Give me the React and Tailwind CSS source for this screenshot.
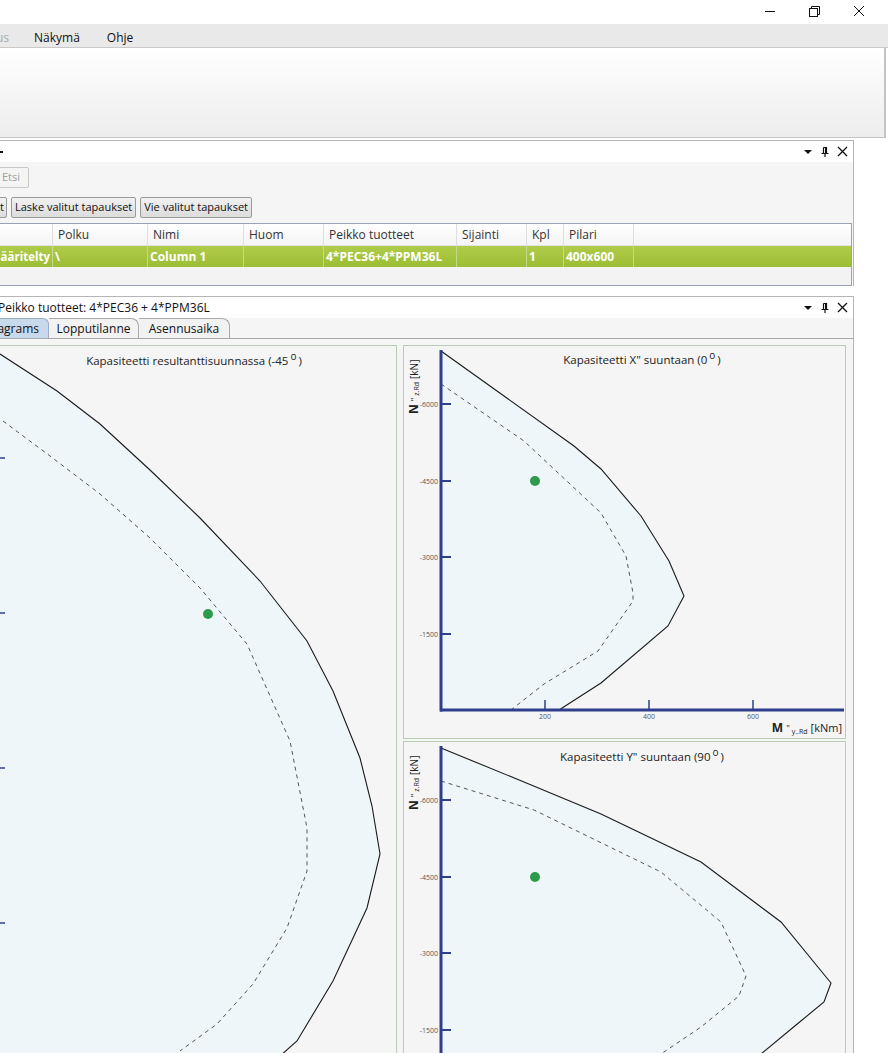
import React from 'react';

const FONT = "font-['Open_Sans','Noto_Sans',sans-serif]";

// ikkunan ohjaimet
const WinControls = () => (
  <div className="flex items-center h-full">
    <svg width="46" height="24" viewBox="0 0 46 24"><line x1="19" y1="11.5" x2="29" y2="11.5" stroke="#111" strokeWidth="1" /></svg>
    <svg width="46" height="24" viewBox="0 0 46 24">
      <rect x="17.5" y="8.5" width="8" height="8" fill="none" stroke="#111" />
      <path d="M19.5 8.5 V6.5 H27.5 V14.5 H25.5" fill="none" stroke="#111" />
    </svg>
    <svg width="46" height="24" viewBox="0 0 46 24">
      <path d="M16 6 L26 16 M26 6 L16 16" stroke="#111" strokeWidth="1" />
    </svg>
  </div>
);

const PanelIcons = () => (
  <div className="flex items-center gap-[7px] pr-[5px]">
    <svg width="10" height="10" viewBox="0 0 10 10"><path d="M1 3 H9 L5 7 Z" fill="#111" /></svg>
    <svg width="10" height="12" viewBox="0 0 10 12">
      <path d="M3.5 1.5 H6.5 V7.5 M3.5 1.5 V7.5 M1.5 7.5 H8.5 M5 7.5 V11" fill="none" stroke="#111" strokeWidth="1.2" />
      <line x1="5.5" y1="1.5" x2="5.5" y2="7.5" stroke="#111" strokeWidth="1" />
    </svg>
    <svg width="11" height="11" viewBox="0 0 11 11"><path d="M1 1 L10 10 M10 1 L1 10" stroke="#111" strokeWidth="1.3" /></svg>
  </div>
);

const Btn = ({ children, disabled, className = '' }) => (
  <div
    className={`h-[21px] px-[3px] flex items-center border rounded-[2px] text-[11px] bg-gradient-to-b from-[#f2f2f2] to-[#dcdcdc] ${
      disabled ? 'border-[#c9c9c9] text-[#a0a0a0] from-[#f4f4f4] to-[#f4f4f4]' : 'border-[#9a9a9a] text-[#111]'
    } ${className}`}
  >
    {children}
  </div>
);

const columns = [
  { label: '', w: 'w-[53px]', value: 'määritelty' },
  { label: 'Polku', w: 'w-[95px]', value: '\\' },
  { label: 'Nimi', w: 'w-[96px]', value: 'Column 1' },
  { label: 'Huom', w: 'w-[80px]', value: '' },
  { label: 'Peikko tuotteet', w: 'w-[133px]', value: '4*PEC36+4*PPM36L' },
  { label: 'Sijainti', w: 'w-[70px]', value: '' },
  { label: 'Kpl', w: 'w-[37px]', value: '1' },
  { label: 'Pilari', w: 'w-[70px]', value: '400x600' },
];

const AXIS = '#2f3f8c';

// Y-akselin otsikko (pystyssä)
const YTitle = ({ x, y }) => (
  <text transform={`translate(${x} ${y}) rotate(-90)`} fontFamily="Open Sans, sans-serif" fill="#222">
    <tspan fontSize="12" fontWeight="bold">N</tspan>
    <tspan fontSize="9" dx="3">"</tspan>
    <tspan fontSize="7" dx="2" dy="1">z.Rd</tspan>
    <tspan fontSize="10" dx="3" dy="-1">[kN]</tspan>
  </text>
);

const YTicks = ({ ys, labels }) => (
  <g>
    {ys.map((y, i) => (
      <g key={i}>
        <line x1="37" y1={y} x2="47" y2={y} stroke={AXIS} strokeWidth="2" />
        <text x="34" y={y + 2.5} fontSize="7" textAnchor="end" fill="#555" fontFamily="Open Sans, sans-serif">{labels[i]}</text>
      </g>
    ))}
  </g>
);

const Degree = () => (
  <>
    <tspan fontSize="10" dy="-5" dx="2">o</tspan>
    <tspan dy="5" dx="2">)</tspan>
  </>
);

const ChartX = () => {
  // koordinaatit suhteessa paneelin vasempaan yläkulmaan (403,345)
  const solid = [[37, 5], [100, 50], [170, 100], [197, 123], [237, 170], [265, 215], [280, 250], [264, 280], [197, 337], [155, 364]];
  const dashed = [[37, 38], [120, 95], [197, 167], [222, 210], [229, 247], [229, 255], [194, 305], [140, 338], [107, 364]];
  const pts = (a) => a.map((p) => p.join(',')).join(' ');
  return (
    <svg width="441" height="392" className="block">
      <polygon points={`${pts(solid)} 37,364`} fill="#eef6f9" />
      <polyline points={pts(solid)} fill="none" stroke="#1a1a1a" strokeWidth="1.1" />
      <polyline points={pts(dashed)} fill="none" stroke="#555" strokeWidth="1" strokeDasharray="4 4" />
      <circle cx="131" cy="135" r="5" fill="#2e9a4b" />
      <text x="238" y="18" fontSize="11.5" textAnchor="middle" fill="#222" fontFamily="Open Sans, sans-serif">
        Kapasiteetti X" suuntaan (0
        <Degree />
      </text>
      <YTitle x={14} y={68} />
      <YTicks ys={[58, 135, 211, 288]} labels={['-6000', '-4500', '-3000', '-1500']} />
      {[141, 245, 349].map((x, i) => (
        <g key={x}>
          <line x1={x} y1="354" x2={x} y2="364" stroke={AXIS} strokeWidth="1.5" />
          <text x={x} y="373" fontSize="7" textAnchor="middle" fill="#555" fontFamily="Open Sans, sans-serif">{[200, 400, 600][i]}</text>
        </g>
      ))}
      <line x1="37" y1="4" x2="37" y2="365.5" stroke={AXIS} strokeWidth="3" />
      <line x1="36" y1="364" x2="440" y2="364" stroke={AXIS} strokeWidth="3" />
      <text x="438" y="386" textAnchor="end" fill="#222" fontFamily="Open Sans, sans-serif">
        <tspan fontSize="12" fontWeight="bold">M</tspan>
        <tspan fontSize="9" dx="3">"</tspan>
        <tspan fontSize="7" dx="2" dy="2">y..Rd</tspan>
        <tspan fontSize="11" dx="3" dy="-2">[kNm]</tspan>
      </text>
    </svg>
  );
};

const ChartY = () => {
  const solid = [[37, 6], [120, 40], [197, 72], [297, 120], [377, 180], [427, 241], [420, 260], [392, 283], [357, 312]];
  const dashed = [[37, 39], [130, 68], [257, 130], [317, 180], [342, 234], [335, 254], [297, 285], [257, 312]];
  const pts = (a) => a.map((p) => p.join(',')).join(' ');
  return (
    <svg width="441" height="312" className="block">
      <polygon points={`${pts(solid)} 37,312`} fill="#eef6f9" />
      <polyline points={pts(solid)} fill="none" stroke="#1a1a1a" strokeWidth="1.1" />
      <polyline points={pts(dashed)} fill="none" stroke="#555" strokeWidth="1" strokeDasharray="4 4" />
      <circle cx="131" cy="135" r="5" fill="#2e9a4b" />
      <text x="238" y="19" fontSize="11.5" textAnchor="middle" fill="#222" fontFamily="Open Sans, sans-serif">
        Kapasiteetti Y" suuntaan (90
        <Degree />
      </text>
      <YTitle x={14} y={68} />
      <YTicks ys={[58, 135, 211, 288]} labels={['-6000', '-4500', '-3000', '-1500']} />
      <line x1="37" y1="4" x2="37" y2="312" stroke={AXIS} strokeWidth="3" />
    </svg>
  );
};

const ChartResultant = () => {
  // x = sivun x, y suhteessa paneelin yläreunaan (345)
  const solid = [[0, 8], [57, 45], [100, 78], [150, 124], [200, 172], [260, 235], [307, 295], [333, 345], [360, 412], [372, 460], [380, 508], [367, 562], [333, 635], [297, 695], [280, 710]];
  const dashed = [[3, 75], [50, 110], [100, 148], [150, 192], [200, 242], [247, 298], [290, 395], [307, 482], [307, 525], [287, 582], [253, 638], [217, 678], [180, 705]];
  const pts = (a) => a.map((p) => p.join(',')).join(' ');
  return (
    <svg width="396" height="710" className="block">
      <polygon points={`${pts(solid)} 0,710`} fill="#eef6f9" />
      <polyline points={pts(solid)} fill="none" stroke="#1a1a1a" strokeWidth="1.1" />
      <polyline points={pts(dashed)} fill="none" stroke="#555" strokeWidth="1" strokeDasharray="4 4" />
      <circle cx="208" cy="268" r="5" fill="#2e9a4b" />
      <text x="194" y="19" fontSize="11.5" textAnchor="middle" fill="#222" fontFamily="Open Sans, sans-serif">
        Kapasiteetti resultanttisuunnassa (-45
        <Degree />
      </text>
      {[112, 267, 422, 577].map((y) => (
        <line key={y} x1="0" y1={y} x2="5" y2={y} stroke={AXIS} strokeWidth="1.5" />
      ))}
    </svg>
  );
};

export default function App() {
  return (
    <div className={`w-[888px] h-[1053px] overflow-hidden bg-white flex flex-col text-[#111] ${FONT}`}>
      {/* otsikkorivi */}
      <div className="h-[24px] flex justify-end pr-[4px]">
        <WinControls />
      </div>

      {/* valikko */}
      <div className="h-[24px] bg-[#e9e9e9] border-b border-[#c9c9c9] flex items-center pt-[5px] text-[12px] whitespace-nowrap">
        <span className="w-[9px] overflow-hidden flex justify-end text-[#a8a8a8]">us</span>
        <span className="ml-[25px]">Näkymä</span>
        <span className="ml-[27px]">Ohje</span>
      </div>

      {/* nauha */}
      <div className="h-[90px] w-[886px] bg-gradient-to-b from-white to-[#ededed] border-r-[2px] border-b border-[#c4c4c4]" />

      <div className="h-[2px]" />

      {/* tapauslista-paneeli */}
      <div className="w-[854px] h-[146px] border-t border-r border-[#b5b5b5] flex flex-col">
        <div className="h-[21px] bg-white flex items-center justify-between">
          <span className="w-[3px] h-[2px] bg-[#111] ml-0" />
          <PanelIcons />
        </div>
        <div className="flex-1 bg-[#f5f5f5] flex flex-col">
          <div className="pt-[5px] flex">
            <Btn disabled className="-ml-[3px] w-[32px] justify-end pr-[8px]">Etsi</Btn>
          </div>
          <div className="pt-[9px] flex gap-[4px]">
            <Btn className="-ml-[3px] w-[10px] justify-end pr-[2px]">t</Btn>
            <Btn>Laske valitut tapaukset</Btn>
            <Btn>Vie valitut tapaukset</Btn>
          </div>
          <div className="mt-[5px] flex-1 mr-[1px] border border-l-0 border-[#9aa3b5] bg-[#f3f3f3] flex flex-col text-[12px]">
            <div className="h-[22px] flex bg-gradient-to-b from-white to-[#f4f4f4] border-b border-[#e2e2e2]">
              {columns.map((c, i) => (
                <div key={i} className={`${c.w} h-full flex items-center pl-[5px] border-r border-[#dedede] text-[#333]`}>
                  {c.label}
                </div>
              ))}
            </div>
            <div className="h-[21px] flex bg-gradient-to-b from-[#b0cc4a] to-[#9cbd33] text-white font-bold">
              {columns.map((c, i) => (
                <div key={i} className={`${c.w} h-full flex items-center pl-[2px] border-r border-[#c4d98a] whitespace-nowrap overflow-hidden ${i === 0 ? 'justify-end pr-[2px] text-[11.5px]' : ''}`}>
                  {c.value}
                </div>
              ))}
            </div>
          </div>
        </div>
      </div>

      <div className="h-[10px]" />

      {/* kaaviopaneeli */}
      <div className="w-[854px] flex-1 border-t border-r border-[#b5b5b5] flex flex-col min-h-0">
        <div className="h-[21px] bg-white flex items-center justify-between">
          <span className="text-[12px] -ml-[2px] whitespace-nowrap">Peikko tuotteet: 4*PEC36 + 4*PPM36L</span>
          <PanelIcons />
        </div>
        <div className="h-[21px] bg-[#f5f5f5] flex items-end border-b border-[#a9a9a9] text-[12px]">
          <div className="h-[20px] w-[49px] flex items-center justify-end pr-[9px] bg-[#c9d9ec] border border-l-0 border-b-0 border-[#9eaec4] rounded-tr-[6px] overflow-hidden whitespace-nowrap">agrams</div>
          <div className="h-[20px] w-[90px] flex items-center justify-center bg-[#f2f2f2] border-t border-r border-[#a9a9a9] rounded-tr-[8px]">Lopputilanne</div>
          <div className="h-[20px] w-[91px] flex items-center justify-center bg-[#f2f2f2] border-t border-r border-[#a9a9a9] rounded-tr-[8px]">Asennusaika</div>
        </div>
        <div className="flex-1 bg-[#f5f5f5] pt-[6px] flex gap-[6px] min-h-0 overflow-hidden">
          <div className="w-[397px] border border-l-0 border-b-0 border-[#b9cdb5] bg-[#f5f5f5]">
            <ChartResultant />
          </div>
          <div className="w-[443px] flex flex-col gap-[2px]">
            <div className="h-[394px] border border-[#b9cdb5] bg-[#f5f5f5]">
              <ChartX />
            </div>
            <div className="flex-1 border border-b-0 border-[#b9cdb5] bg-[#f5f5f5]">
              <ChartY />
            </div>
          </div>
        </div>
      </div>
    </div>
  );
}
